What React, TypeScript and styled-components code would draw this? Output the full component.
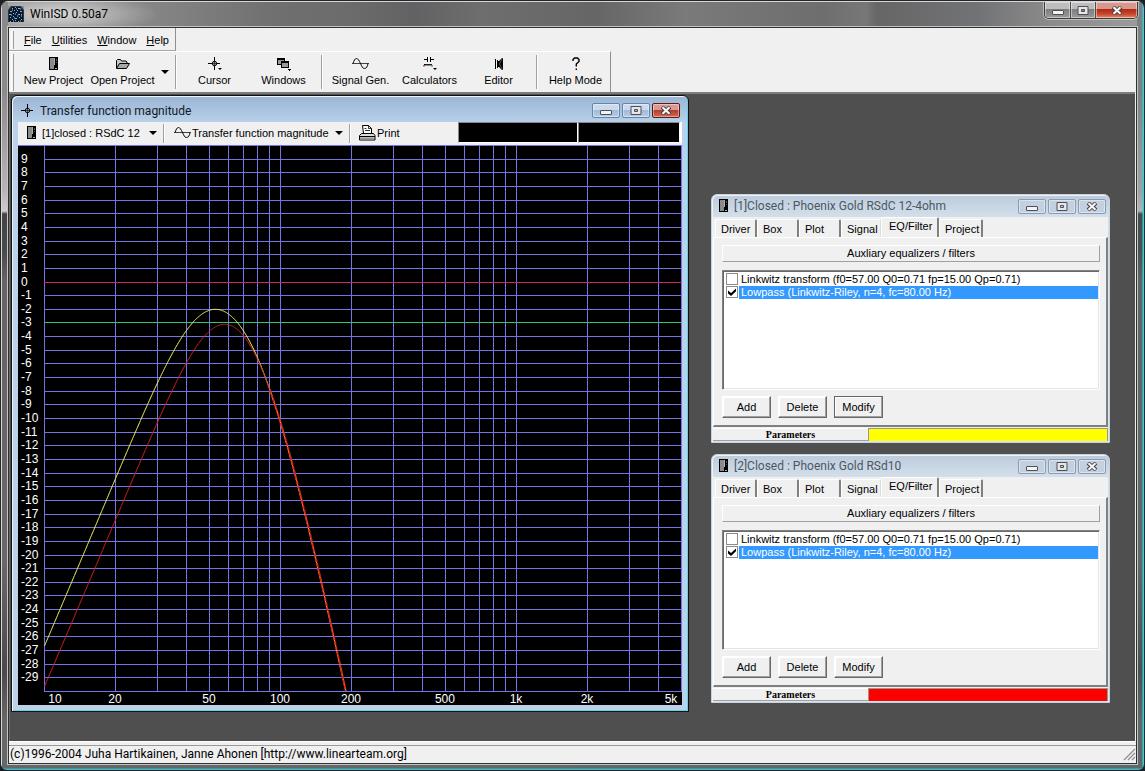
import React from 'react';
import styled, { createGlobalStyle, css } from 'styled-components';

const GlobalStyle = createGlobalStyle`
  *, *::before, *::after { box-sizing: border-box; }
  body { margin: 0; background: #1c1f22; }
  button, input, select { font: inherit; color: inherit; margin: 0; }
`;

const uiFont = '"Liberation Sans", Arial, sans-serif';
const captionFont = 'Roboto, "Open Sans", sans-serif';

/* ---------- main frame ---------- */

const Frame = styled.main`
  display: flex;
  flex-direction: column;
  min-height: 100vh;
  padding: 0 7px 6px;
  border: 1px solid #24262a;
  border-right-color: #10343c;
  border-radius: 8px 8px 7px 7px;
  overflow: hidden;
  font: 11px/14px ${uiFont};
  color: #000;
  background:
    linear-gradient(90deg, #d8d8d8 0 1px, transparent 1px),
    linear-gradient(270deg, #4cc3d6 0 1px, transparent 2px),
    linear-gradient(0deg, #45b4cc 0 1px, transparent 2px),
    linear-gradient(180deg, #d6d6d6 0 1px, transparent 1px),
    linear-gradient(90deg, transparent 0 50%, rgba(70, 110, 110, 0.25) 50%),
    linear-gradient(180deg, #8a8a8a 0, #8c8a8a 90px, #b9b5b5 190px, #d2cccc 210px, #434343 213px, #4a4a4a 250px, #666462 280px, #6a6866 560px, #4c4a48 670px, #6a6866 720px, #62686a 100%);
`;

const Caption = styled.header`
  display: flex;
  align-items: flex-start;
  height: 25px;
  flex: none;
  margin-top: 1px;
  background:
    radial-gradient(ellipse 100px 22px at 50px 12px, rgba(225, 225, 225, 0.9), rgba(200, 200, 200, 0) 100%),
    linear-gradient(90deg, #8c8c8c 0, #858585 13%, #6f6f70 24%, #6c6c6c 30%, #626264 36%, #6e6e6e 42%, #666 52%, #7a7a7a 60%, #6e6e6e 72%, #777 76%, #666 77%, #727376 86%, #8a8a8a 92%, #9a9a9a 100%);
`;

const CaptionTitle = styled.h1`
  flex: 1;
  margin: 0 0 0 6px;
  font: 12px/24px ${captionFont};
`;

const AppIconBox = styled.span`
  display: block;
  width: 16px;
  height: 16px;
  margin-top: 4px;
`;

const FrameButtons = styled.div`
  display: flex;
  border: 1px solid #3a3a3a;
  border-top: 0;
  border-radius: 0 0 5px 5px;
  box-shadow: 0 0 0 1px rgba(220, 220, 220, 0.6);
  overflow: hidden;
  margin-right: -1px;
`;

const FrameButton = styled.button<{ $close?: boolean }>`
  display: grid;
  place-items: center;
  width: ${(p) => (p.$close ? 42 : 25)}px;
  height: 16px;
  padding: 0;
  border: 0;
  border-left: 1px solid #4a4a4a;
  box-shadow: inset 0 0 0 1px rgba(255, 255, 255, 0.45);
  background: ${(p) =>
    p.$close
      ? 'linear-gradient(#d9988c 0 45%, #b02a18 46%, #c9452c 75%, #e08a6c)'
      : 'linear-gradient(#bdbdbd 0 45%, #7e7e7e 46%, #9a9a9a)'};
  &:first-child { border-left: 0; }
`;

const Client = styled.div`
  display: flex;
  flex: 1;
  flex-direction: column;
  background: #f0f0f0;
  border: 1px solid #303030;
  box-shadow: 0 0 0 1px #c4c4c4;
`;

/* ---------- menu and tool bars ---------- */

const MenuBar = styled.nav`
  display: flex;
  align-self: flex-start;
  align-items: center;
  height: 23px;
  padding: 1px 1px 0 0;
  border-right: 1px solid #8f8f8f;
  border-bottom: 1px solid #a8a8a8;
`;

const Grip = styled.span`
  align-self: stretch;
  width: 3px;
  margin: 2px 5px 1px 2px;
  border-left: 1px solid #fff;
  border-right: 1px solid #a0a0a0;
`;

const MenuItem = styled.button`
  padding: 0 5px;
  border: 0;
  background: none;
  line-height: 18px;
  &::first-letter { text-decoration: underline; }
`;

const ToolBar = styled.div`
  display: flex;
  align-self: flex-start;
  height: 41px;
  border-top: 1px solid #fff;
  border-right: 1px solid #8f8f8f;
`;

const ToolButton = styled.button`
  display: flex;
  flex-direction: column;
  align-items: center;
  width: 69px;
  padding: 5px 0 0;
  border: 0;
  background: none;
  line-height: 14px;
  white-space: nowrap;
  svg { margin-bottom: 2px; }
`;

const DropButton = styled.button`
  width: 15px;
  padding: 0;
  border: 0;
  background: none;
  display: grid;
  place-items: center;
`;

const Caret = styled.span`
  flex: none;
  width: 0;
  height: 0;
  border: 4px solid transparent;
  border-top-color: #000;
  border-bottom: 0;
`;

const Separator = styled.span`
  flex: none;
  width: 2px;
  margin: 3px;
  border-left: 1px solid #a0a0a0;
  border-right: 1px solid #fff;
`;

/* ---------- MDI area ---------- */

const Desktop = styled.section`
  position: relative;
  flex: 1;
  min-height: 640px;
  margin-right: 1px;
  background: #4f4f4f;
  border-top: 2px solid #7c7c7c;
  border-left: 1px solid #6a6a6a;
`;

const StatusBar = styled.footer`
  display: flex;
  align-items: center;
  justify-content: space-between;
  height: 22px;
  flex: none;
  border-top: 1px solid #fff;
  padding-top: 3px;
  background: linear-gradient(#f0f0f0 0 3px, #9a9a9a 3px 4px, #f0f0f0 4px);
  font: 12px/18px ${captionFont};
`;

const StatusText = styled.span`
  padding-left: 1px;
`;

const Child = styled.article<{ $x: number; $y: number; $w: number; $active?: boolean }>`
  position: absolute;
  left: ${(p) => p.$x}px;
  top: ${(p) => p.$y}px;
  width: ${(p) => p.$w}px;
  display: flex;
  flex-direction: column;
  border-radius: 6px 6px 0 0;
  ${(p) =>
    p.$active
      ? css`
          padding: 0 6px 6px;
          border: 1px solid #111;
          box-shadow: inset 1px 1px 0 #eef5fc, inset -1px -1px 0 #5fd2ee;
          background: linear-gradient(#9ab5d3, #b9d1ea 27px, #bcd2ea);
        `
      : css`
          padding: 0 1px 1px;
          border: 1px solid #c9d3de;
          box-shadow: inset 1px 1px 0 #eef3f8;
          background: linear-gradient(#bccbdb, #d3dfeb 22px, #dbe4ee);
        `}
`;

const ChildCaption = styled.header<{ $active?: boolean }>`
  display: flex;
  align-items: center;
  height: ${(p) => (p.$active ? 26 : 22)}px;
  padding: ${(p) => (p.$active ? '3px 2px 0' : '0 2px 0 5px')};
  color: ${(p) => (p.$active ? '#111a26' : '#4c5763')};
`;

const ChildTitle = styled.h2`
  flex: 1;
  margin: 0 0 0 5px;
  font: 12px/18px ${captionFont};
  white-space: nowrap;
`;

const ChildButtons = styled.div`
  display: flex;
  gap: 2px;
`;

const ChildButton = styled.button<{ $active?: boolean; $close?: boolean }>`
  display: grid;
  place-items: center;
  width: 28px;
  height: 15px;
  padding: 0;
  border-radius: 2px;
  border: 1px solid ${(p) => (p.$active ? (p.$close ? '#5c1a1a' : '#6783a6') : '#8b9bb0')};
  box-shadow: inset 0 0 0 1px rgba(255, 255, 255, 0.4);
  background: ${(p) =>
    !p.$active
      ? '#c3d0df'
      : p.$close
        ? 'linear-gradient(#d99a92 0 45%, #b43a2c 46%, #d06a50)'
        : 'linear-gradient(#c9daee 0 45%, #9fb9d8 46%, #b6cde6)'};
`;

/* ---------- plot window ---------- */

const PlotBar = styled.div`
  display: flex;
  align-items: center;
  height: 23px;
  padding-bottom: 1px;
  background: #f0f0f0;
`;

const Picker = styled.label<{ $width: number; $gap: number }>`
  display: flex;
  align-items: center;
  width: ${(p) => p.$width}px;
  padding: 0 5px 0 8px;
  gap: ${(p) => p.$gap}px;
`;

const PickerSelect = styled.select`
  appearance: none;
  flex: 1;
  min-width: 0;
  padding: 0;
  border: 0;
  background: none;
  line-height: 16px;
`;

const BarRule = styled.span`
  flex: none;
  width: 2px;
  height: 19px;
  margin: 0 1px;
  border-left: 1px solid #a0a0a0;
  border-right: 1px solid #fff;
`;

const PrintButton = styled.button`
  display: flex;
  align-items: center;
  gap: 1px;
  padding: 0 7px;
  border: 0;
  background: none;
`;

const Readouts = styled.div`
  display: flex;
  align-self: flex-start;
  width: 224px;
  height: 21px;
  margin-left: auto;
  border-right: 2px solid #fff;
`;

const Readout = styled.output`
  flex: 1;
  background: #000;
  border: 1px solid #fff;
  border-top-color: #888;
  border-left-color: #888;
  &:first-child { flex: 0 0 120px; }
`;

const ChartSvg = styled.svg`
  display: block;
  width: 100%;
  height: 560px;
  background: #000;
`;

const DECADE = 236;
const LEFT = 26;
const RIGHT = 663;
const BOTTOM = 546;
const fx = (f: number) => LEFT + DECADE * Math.log10(f / 10);
const dy = (db: number) => (10 - db) * 13.65;

const response = (f: number, f0: number, q: number) => {
  const r = (f / f0) ** 2;
  const box = r / Math.sqrt((1 - r) ** 2 + r / (q * q));
  const lowpass = 1 / (1 + (f / 80) ** 4);
  return 20 * Math.log10(box * lowpass);
};

const curve = (f0: number, q: number, from: number, to: number) => {
  const pts: string[] = [];
  for (let x = fx(from); x <= fx(to); x += 1) {
    const f = 10 * 10 ** ((x - LEFT) / DECADE);
    const y = dy(response(f, f0, q));
    if (y > BOTTOM + 20) break;
    pts.push(`${(x + 0.5).toFixed(1)},${(y + 0.5).toFixed(1)}`);
  }
  return pts.join(' ');
};

const freqs = [10, 20, 30, 40, 50, 60, 70, 80, 90, 100, 200, 300, 400, 500, 600, 700, 800, 900, 1000, 2000, 3000, 4000, 5000];
const levels = Array.from({ length: 39 }, (_, i) => 9 - i);
const freqLabels: [string, number][] = [
  ['10', 37], ['20', fx(20)], ['50', fx(50)], ['100', fx(100)], ['200', fx(200)],
  ['500', fx(500)], ['1k', fx(1000)], ['2k', fx(2000)], ['5k', 653],
];

function Chart() {
  return (
    <ChartSvg role="img" aria-label="Transfer function magnitude in dB against frequency in Hz">
      <defs>
        <clipPath id="plot"><rect x={LEFT} y="0" width={RIGHT - LEFT} height={BOTTOM} /></clipPath>
      </defs>
      <g shapeRendering="crispEdges" fill="#7474e6">
        {freqs.map((f) => (
          <rect key={f} x={Math.round(fx(f))} y="0" width="1" height={BOTTOM} />
        ))}
        <rect x="0" y="0" width={RIGHT + 1} height="1" />
        {[...levels, -30].map((v) => (
          <rect
            key={v}
            x={LEFT}
            y={Math.round(dy(v))}
            width={RIGHT + 1 - LEFT}
            height="1"
            fill={v === 0 ? '#c8266e' : v === -3 ? '#35c468' : '#7474e6'}
          />
        ))}
      </g>
      <g fill="none" clipPath="url(#plot)">
        <polyline points={curve(46.7, 0.854, 10, 200)} stroke="#f2f25a" />
        <polyline points={curve(55.3, 0.855, 10, 90)} stroke="#d0201c" />
        <polyline points={curve(55.3, 0.855, 90, 200)} stroke="#e02218" strokeWidth="2" strokeDasharray="4 1" />
      </g>
      <g fill="#fff" fontSize="12" fontFamily="Liberation Sans, Arial, sans-serif">
        {levels.map((v) => (
          <text key={v} x="3" y={Math.round(dy(v)) + 4}>{v}</text>
        ))}
        {freqLabels.map(([t, x]) => (
          <text key={t} x={x} y="558" textAnchor="middle">{t}</text>
        ))}
      </g>
    </ChartSvg>
  );
}

/* ---------- project windows ---------- */

const ProjectBody = styled.div`
  display: flex;
  flex-direction: column;
  background: #f0f0f0;
`;

const Tabs = styled.div`
  display: flex;
  align-items: flex-end;
  height: 20px;
  padding-left: 2px;
`;

const Tab = styled.button<{ $selected?: boolean }>`
  min-width: ${(p) => (p.$selected ? 58 : 40)}px;
  height: ${(p) => (p.$selected ? 20 : 18)}px;
  padding: ${(p) => (p.$selected ? '0 4px 4px 7px' : '0 2px 0 5px')};
  border: 0;
  border-top: 1px solid #fff;
  border-left: 1px solid #fff;
  border-right: 2px solid #808080;
  border-radius: 2px 2px 0 0;
  background: #f0f0f0;
  text-align: left;
  white-space: nowrap;
  &:nth-child(-n + 3) { min-width: 42px; }
  &:nth-child(4) { border-right: 1px solid #dcdcdc; }
`;

const Pane = styled.div`
  display: flex;
  flex-direction: column;
  padding: 7px 6px 7px 8px;
  border-top: 1px solid #fff;
  border-left: 1px solid #fff;
  border-right: 2px solid #808080;
  border-bottom: 2px solid #808080;
`;

const PaneHeader = styled.div`
  height: 17px;
  line-height: 15px;
  text-align: center;
  border: 1px solid #fff;
  border-right-color: #a0a0a0;
  border-bottom-color: #a0a0a0;
`;

const FilterList = styled.ul`
  height: 120px;
  margin: 8px 0 6px;
  padding: 1px 0 0 2px;
  list-style: none;
  background: #fff;
  border: 1px solid #fff;
  border-top-color: #808080;
  border-left-color: #808080;
  box-shadow: inset 1px 1px 0 #696969, inset -1px -1px 0 #e3e3e3;
`;

const FilterRow = styled.li`
  display: flex;
  height: 13px;
  padding-right: 1px;
  &:first-child { margin-top: 1px; }
`;

const Tick = styled.input`
  appearance: none;
  flex: none;
  display: grid;
  place-items: center;
  width: 12px;
  height: 12px;
  margin: 0 1px;
  border: 1px solid #8c8c8c;
  background: #fff;
  &:checked::after {
    content: '';
    width: 8px;
    height: 8px;
    background: #000;
    clip-path: polygon(0 30%, 38% 62%, 100% 5%, 100% 42%, 38% 100%, 0 68%);
  }
`;

const FilterLabel = styled.label<{ $selected?: boolean }>`
  flex: 1;
  padding-left: 2px;
  line-height: 13px;
  white-space: nowrap;
  ${(p) => p.$selected && css`background: #3399ff; color: #fff;`}
`;

const Actions = styled.div`
  display: flex;
  gap: 7px;
`;

const ActionButton = styled.button<{ $default?: boolean }>`
  width: 49px;
  height: 22px;
  padding: 0;
  background: #f0f0f0;
  border: 1px solid ${(p) => (p.$default ? '#646464' : '#fff')};
  border-right-color: #696969;
  border-bottom-color: #696969;
  box-shadow: inset -1px -1px 0 #a0a0a0, inset 1px 1px 0 #fff;
`;

const ParamRow = styled.div`
  display: grid;
  grid-template-columns: 155px 1fr;
  height: 14px;
  padding-top: 1px;
  border-bottom: 1px solid #a0a0a0;
`;

const ParamLabel = styled.span`
  font: bold 10px/12px "Liberation Serif", serif;
  text-align: center;
  border-top: 1px solid #fff;
`;

const ColorSwatch = styled.span<{ $color: string }>`
  background: ${(p) => p.$color};
  border: 1px solid #9a9a8a;
  border-bottom: 0;
`;

const tabNames = ['Driver', 'Box', 'Plot', 'Signal', 'EQ/Filter', 'Project'];
const filters = [
  { text: 'Linkwitz transform (f0=57.00 Q0=0.71 fp=15.00 Qp=0.71)', on: false },
  { text: 'Lowpass (Linkwitz-Riley, n=4, fc=80.00 Hz)', on: true },
];

function ProjectWindow(p: { id: string; title: string; y: number; color: string; focus?: boolean }) {
  return (
    <Child $x={701} $y={p.y} $w={399}>
      <ChildCaption>
        <BoxIcon />
        <ChildTitle>{p.title}</ChildTitle>
        <WindowButtons />
      </ChildCaption>
      <ProjectBody>
        <Tabs role="tablist">
          {tabNames.map((t) => (
            <Tab key={t} role="tab" aria-selected={t === 'EQ/Filter'} $selected={t === 'EQ/Filter'}>{t}</Tab>
          ))}
        </Tabs>
        <Pane>
          <PaneHeader>Auxliary equalizers / filters</PaneHeader>
          <FilterList>
            {filters.map((f, i) => (
              <FilterRow key={f.text}>
                <Tick type="checkbox" id={`${p.id}-f${i}`} defaultChecked={f.on} />
                <FilterLabel htmlFor={`${p.id}-f${i}`} $selected={f.on}>{f.text}</FilterLabel>
              </FilterRow>
            ))}
          </FilterList>
          <Actions>
            <ActionButton>Add</ActionButton>
            <ActionButton>Delete</ActionButton>
            <ActionButton $default={p.focus}>Modify</ActionButton>
          </Actions>
        </Pane>
        <ParamRow>
          <ParamLabel>Parameters</ParamLabel>
          <ColorSwatch $color={p.color} />
        </ParamRow>
      </ProjectBody>
    </Child>
  );
}

/* ---------- icons ---------- */

const Icon = styled.svg`
  display: block;
  flex: none;
`;

const BoxIcon = () => (
  <Icon width="11" height="14" viewBox="0 0 11 14" shapeRendering="crispEdges">
    <rect x="1" y="0" width="9" height="13" fill="#000" />
    <rect x="2" y="1" width="4" height="11" fill="#8a8a8a" />
    <path d="M6 1h1v7h-1zM7 11h2v1h-2z" fill="#b0b0b0" />
    <path d="M8 2h1v2h-1zM8 5h1v1h-1z" fill="#555" />
  </Icon>
);

const CrossIcon = ({ menu }: { menu?: boolean }) => (
  <Icon width="15" height="14" viewBox="0 0 15 14">
    <path d="M1 6.5h12M7.5 0v13" stroke="#000" shapeRendering="crispEdges" />
    <circle cx="7.5" cy="6.5" r="2.200" fill="#bbb" stroke="#000" />
    <path d="M5 6.5h5M7.5 4v5" stroke="#000" strokeWidth="0.6" />
    {menu && <path d="M11 11h4l-2 2z" fill="#000" />}
  </Icon>
);

const FolderIcon = () => (
  <Icon width="16" height="14" viewBox="0 0 16 14">
    <path d="M1.5 11V3.500l1-1h3l1 1.500h4.500l1 1v1.500" fill="#c8c8c8" stroke="#000" />
    <path d="M1.500 11.500l3-5h10l-3 5z" fill="#a8a8a8" stroke="#000" />
  </Icon>
);

const WindowsIcon = () => (
  <Icon width="15" height="14" viewBox="0 0 15 14" shapeRendering="crispEdges">
    <rect x="1.5" y="1.5" width="7" height="6" fill="#999" stroke="#000" />
    <path d="M1 2h8" stroke="#000" strokeWidth="2" />
    <rect x="5.5" y="4.5" width="7" height="6" fill="#999" stroke="#000" />
    <path d="M5 5h8" stroke="#000" strokeWidth="2" />
    <path d="M11 12h4l-2 2z" fill="#000" />
  </Icon>
);

const WaveIcon = () => (
  <Icon width="17" height="14" viewBox="0 0 17 14" fill="none" stroke="#000">
    <path d="M0 6.5h17" stroke="#444" shapeRendering="crispEdges" />
    <path d="M1 6.5C2 3.5 3 1.5 4.5 1.5S7 3.5 8.5 6.5s2 5 4 5 3-2 3.500-5" />
  </Icon>
);

const CircuitIcon = () => (
  <Icon width="15" height="14" viewBox="0 0 15 14" fill="none" stroke="#000">
    <path d="M2 2.5h4M8 2.5h4M5.5 0v5M8.5 0v5" shapeRendering="crispEdges" />
    <path d="M2 9.500v-1.500l1-1 1 1.500 1-1.500 1 1.500 1-1.500 1 1.500 1-1.500 1 1.500v1" />
    <path d="M11 11h4l-2 2z" fill="#000" stroke="none" />
  </Icon>
);

const SpeakerIcon = () => (
  <Icon width="12" height="14" viewBox="0 0 12 14">
    <path d="M2.500 2v10M4.500 3v8" stroke="#000" shapeRendering="crispEdges" />
    <path d="M5 4h1l3-3h1v12h-1l-3-3h-1z" fill="#000" />
    <path d="M9.500 1L6.500 7l3 6" fill="none" stroke="#777" strokeWidth="0.7" />
  </Icon>
);

const HelpIcon = () => (
  <Icon width="12" height="14" viewBox="0 0 12 14" fill="none" stroke="#000" strokeWidth="1.4">
    <path d="M3 4V2.500L4.500 1h3L9 2.500V4.500L6.300 7v2.500" />
    <path d="M5.600 12.300h1.400" />
  </Icon>
);

const PrinterIcon = () => (
  <Icon width="17" height="16" viewBox="0 0 17 16">
    <path d="M4.500 8.500l-1-8h6l3 3v5" fill="#fff" stroke="#000" />
    <path d="M9.500 0.500v3h3M5.500 3.500h2M6 5.500h5" fill="none" stroke="#000" strokeWidth="0.8" />
    <path d="M0.500 10.500l2-2h12l1.500 2v4.500h-15.500z" fill="#ddd" stroke="#000" />
    <path d="M0.500 11.500h15.500" stroke="#000" />
    <path d="M1 13.500h14" stroke="#999" strokeWidth="2" />
  </Icon>
);

const AppIcon = () => (
  <Icon width="16" height="16" viewBox="0 0 16 16">
    <rect width="16" height="16" fill="#2a3442" />
    <path d="M1 16V5l3-4h8l3 4v11z" fill="#0d1828" />
    <path d="M0 0h3L0 4zM16 0h-3l3 4z" fill="#8a9098" />
    <path
      d="M4 2h1M7 1h1M10 2h2M2 5h2M6 4h1M9 4h1M12 5h2M1 8h2M5 7h1M8 6h1M10 8h2M13 8h1M2 11h1M5 10h1M7 12h2M11 11h1M13 13h1M4 13h1M10 15h1M7 14h1M2 15h1"
      stroke="#86b4de"
      shapeRendering="crispEdges"
    />
    <path d="M4 4h1M8 3h1M12 3h1M7 8h1M3 9h1M9 10h1M13 10h1M6 12h1M12 15h1M5 15h1" stroke="#3f74ae" strokeWidth="2" />
  </Icon>
);

const MinGlyph = () => (
  <Icon width="12" height="9" viewBox="0 0 12 9">
    <rect x="0.5" y="4.5" width="11" height="4" rx="0.5" fill="#f4f4f4" stroke="#4a4f58" />
  </Icon>
);
const MaxGlyph = () => (
  <Icon width="12" height="9" viewBox="0 0 12 9">
    <path fillRule="evenodd" d="M1 .5h10v8H1zM4.500 3.500v2h3v-2z" fill="#e6e6e6" stroke="#4a4f58" />
  </Icon>
);
const CloseGlyph = () => (
  <Icon width="12" height="9" viewBox="0 0 12 9">
    <path d="M2 1L10 8M10 1L2 8" stroke="#4a4048" strokeWidth="4" />
    <path d="M2.500 1.300L9.500 7.700M9.500 1.300L2.500 7.700" stroke="#f6f6f6" strokeWidth="2.2" />
  </Icon>
);
const SizeGrip = () => (
  <Icon width="13" height="13" viewBox="0 0 13 13">
    <path d="M1 12L12 1M5 12l7-7M9 12l3-3" stroke="#909090" strokeWidth="1.3" />
  </Icon>
);

function WindowButtons({ active }: { active?: boolean }) {
  return (
    <ChildButtons>
      <ChildButton $active={active} aria-label="Minimize"><MinGlyph /></ChildButton>
      <ChildButton $active={active} aria-label="Maximize"><MaxGlyph /></ChildButton>
      <ChildButton $active={active} $close aria-label="Close"><CloseGlyph /></ChildButton>
    </ChildButtons>
  );
}

/* ---------- application ---------- */

export default function App() {
  return (
    <>
      <GlobalStyle />
      <Frame>
        <Caption>
          <AppIconBox><AppIcon /></AppIconBox>
          <CaptionTitle>WinISD 0.50a7</CaptionTitle>
          <FrameButtons>
            <FrameButton aria-label="Minimize"><MinGlyph /></FrameButton>
            <FrameButton aria-label="Maximize"><MaxGlyph /></FrameButton>
            <FrameButton $close aria-label="Close"><CloseGlyph /></FrameButton>
          </FrameButtons>
        </Caption>
        <Client>
          <MenuBar>
            <Grip />
            <MenuItem>File</MenuItem>
            <MenuItem>Utilities</MenuItem>
            <MenuItem>Window</MenuItem>
            <MenuItem>Help</MenuItem>
          </MenuBar>
          <ToolBar role="toolbar">
            <Grip />
            <ToolButton><BoxIcon />New Project</ToolButton>
            <ToolButton><FolderIcon />Open Project</ToolButton>
            <DropButton aria-label="Recent projects"><Caret /></DropButton>
            <Separator />
            <ToolButton><CrossIcon menu />Cursor</ToolButton>
            <ToolButton><WindowsIcon />Windows</ToolButton>
            <Separator />
            <ToolButton><WaveIcon />Signal Gen.</ToolButton>
            <ToolButton><CircuitIcon />Calculators</ToolButton>
            <ToolButton><SpeakerIcon />Editor</ToolButton>
            <Separator />
            <ToolButton><HelpIcon />Help Mode</ToolButton>
          </ToolBar>
          <Desktop>
            <Child $x={1} $y={1} $w={678} $active>
              <ChildCaption $active>
                <CrossIcon />
                <ChildTitle>Transfer function magnitude</ChildTitle>
                <WindowButtons active />
              </ChildCaption>
              <PlotBar>
                <Picker $width={144} $gap={5}>
                  <BoxIcon />
                  <PickerSelect aria-label="Project"><option>[1]closed : RSdC 12</option></PickerSelect>
                  <Caret />
                </Picker>
                <BarRule />
                <Picker $width={182} $gap={1}>
                  <WaveIcon />
                  <PickerSelect aria-label="Plot"><option>Transfer function magnitude</option></PickerSelect>
                  <Caret />
                </Picker>
                <BarRule />
                <PrintButton><PrinterIcon />Print</PrintButton>
                <Readouts>
                  <Readout aria-label="Frequency" />
                  <Readout aria-label="Level" />
                </Readouts>
              </PlotBar>
              <Chart />
            </Child>
            <ProjectWindow id="p1" title="[1]Closed : Phoenix Gold RSdC 12-4ohm" y={100} color="#ffff00" focus />
            <ProjectWindow id="p2" title="[2]Closed : Phoenix Gold RSd10" y={360} color="#ff0000" />
          </Desktop>
          <StatusBar>
            <StatusText>(c)1996-2004 Juha Hartikainen, Janne Ahonen [http://www.linearteam.org]</StatusText>
            <SizeGrip />
          </StatusBar>
        </Client>
      </Frame>
    </>
  );
}
